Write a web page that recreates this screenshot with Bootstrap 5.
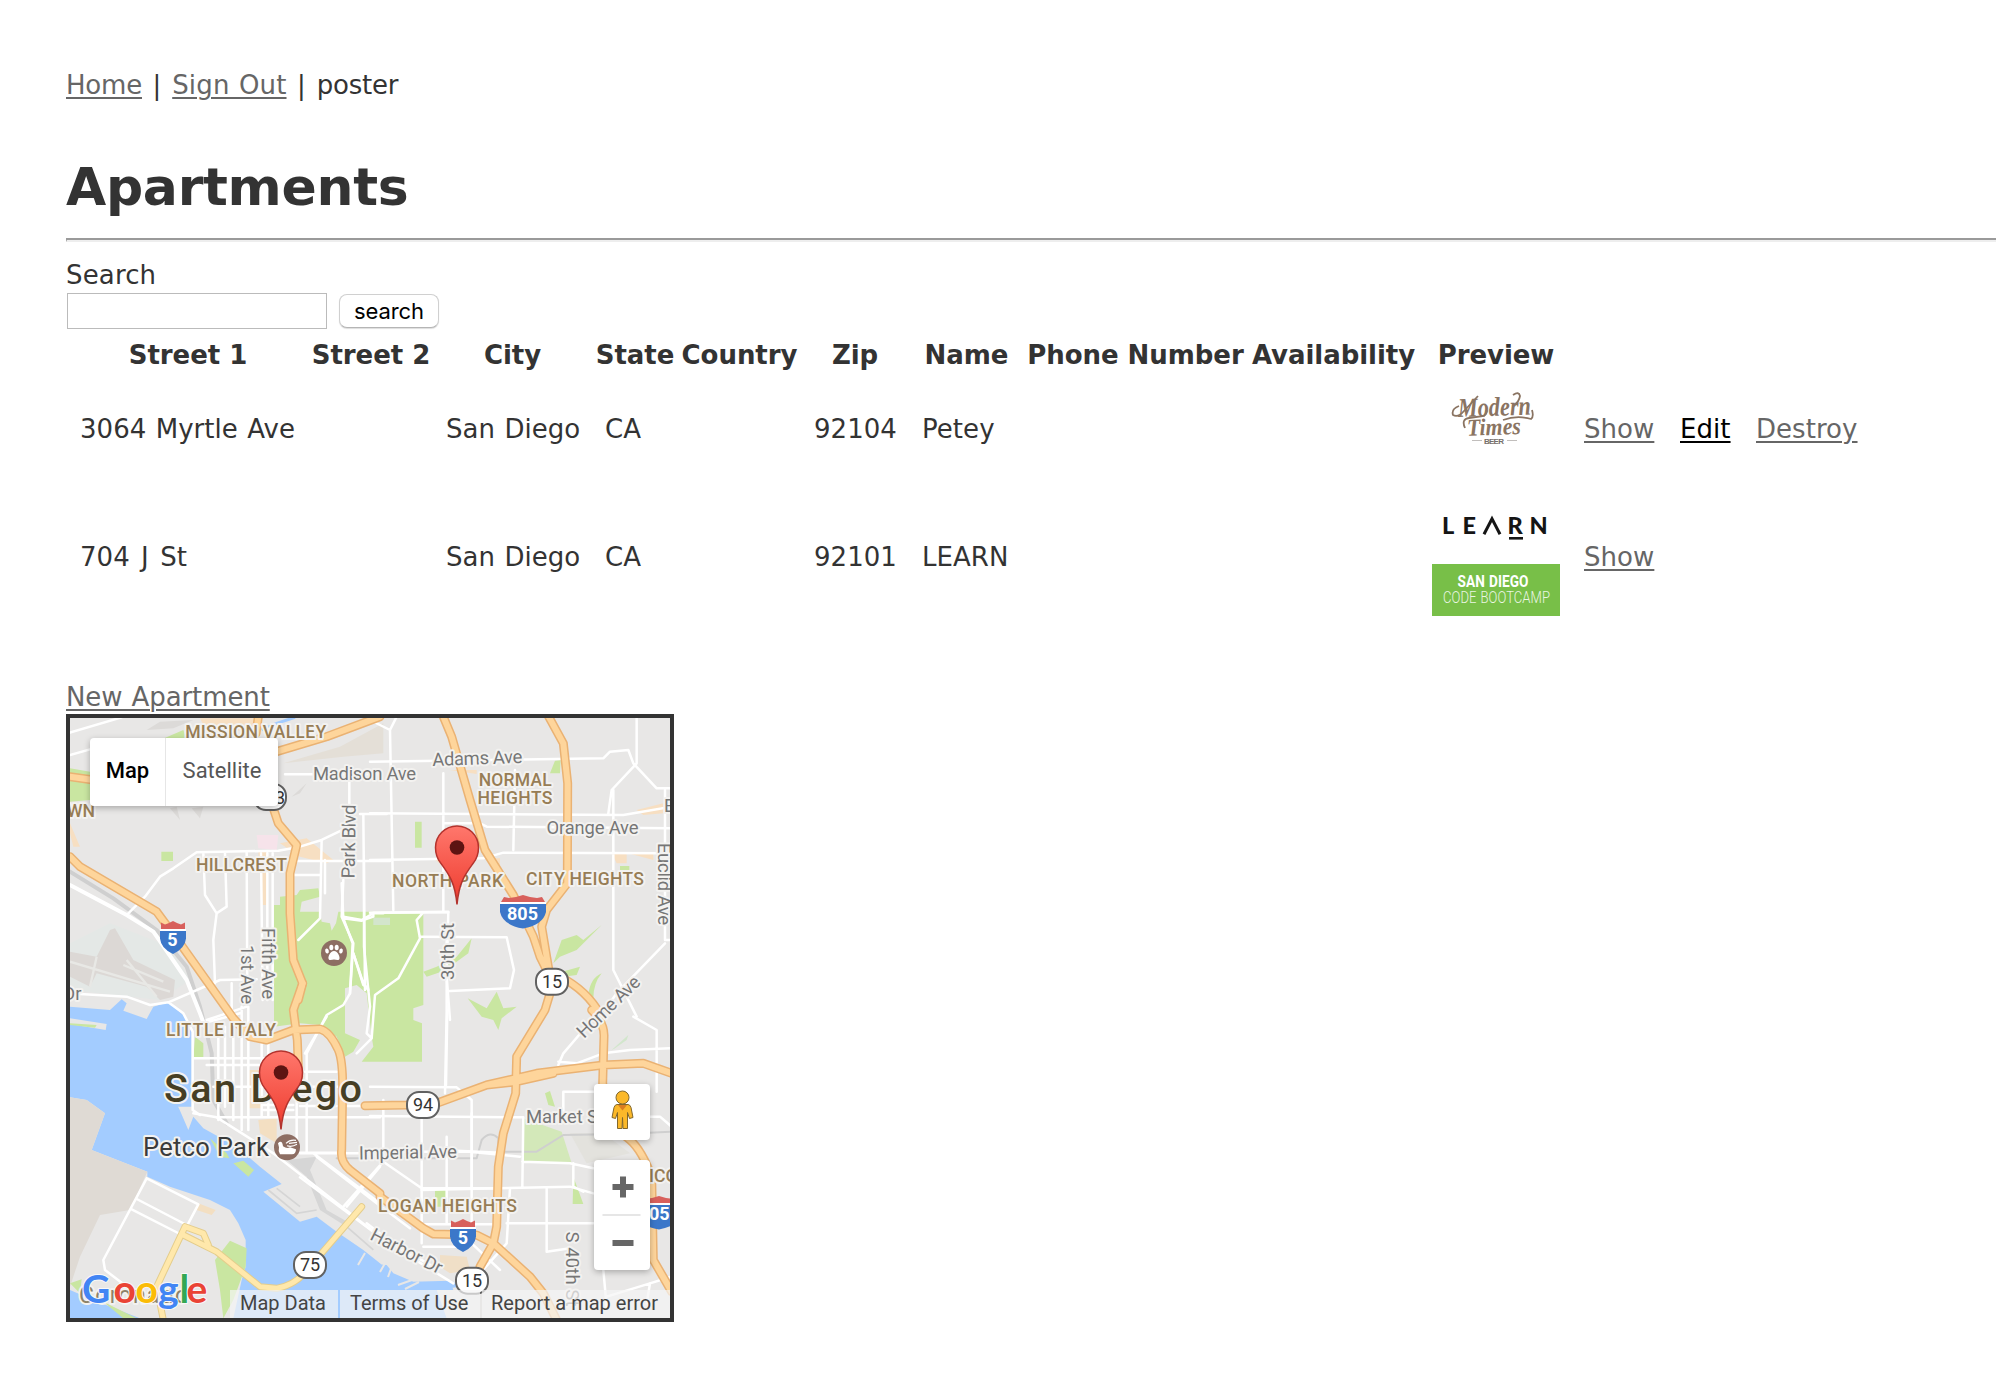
<!DOCTYPE html>
<html lang="en">
<head>
<meta charset="utf-8">
<title>Apartments</title>
<link href="https://cdn.jsdelivr.net/npm/bootstrap@5.3.0/dist/css/bootstrap.min.css" rel="stylesheet">
<script src="https://cdn.jsdelivr.net/npm/bootstrap@5.3.0/dist/js/bootstrap.bundle.min.js"></script>
<style>
body{font-family:"DejaVu Sans",Verdana,sans-serif;font-size:26px;line-height:36px;color:#333;background:#fff;overflow:hidden}
.page{padding:67px 0 0 66px}
a{color:#666;text-decoration-thickness:2px;text-underline-offset:3px}
.topnav{height:36px;letter-spacing:-.2px;white-space:pre;word-spacing:1px}
.topnav i{font-style:normal;margin:0 2px 0 1.5px}
.topnav .out{letter-spacing:.15px}
h1.title{font-size:52px;line-height:72px;font-weight:700;letter-spacing:-.3px;margin:48px 0 15px}
.rule{height:4px;border-top:2px solid #9a9a9a;border-left:1px solid #9a9a9a;border-bottom:2px solid #eee;margin-bottom:15px}
.lbl{letter-spacing:.15px;height:36px}
.q{width:260px;height:36px;margin-left:1px;border:1px solid #bbb;border-radius:0;padding:0 6px}
.go{width:100px;height:34px;margin:1px 0 0 12px;border:1px solid #d0d0d0;border-bottom-color:#b5b5b5;border-radius:8px;background:#fff;color:#000;font:22px/31px Inter,sans-serif;letter-spacing:-.1px;padding:0;box-shadow:0 1px 1px #ddd}
.apts{table-layout:fixed;width:1803px!important;margin-left:1px;color:#333;letter-spacing:.05px;word-spacing:1px}
.apts>:not(caption)>*>*{padding:0 0 0 13px;white-space:nowrap;color:#333}
.apts>tbody>tr>td:nth-child(n+10){padding-left:12px}
.apts>thead>tr>th{padding:8px 0 3px;text-align:center;letter-spacing:-.05px;word-spacing:0}
.apts svg{display:block}
.apts a.on{color:#000}
.wide-j{margin:0 2px 0 2px}
.newapt{margin-top:47px;height:35px;letter-spacing:-.1px;word-spacing:1px}
.map{width:608px;height:608px;border:4px solid #333;font-family:Roboto,sans-serif}
.map>svg{display:block}
.ctl{background:#fff;border-radius:4px;box-shadow:0 2px 6px rgba(0,0,0,.28)}
.types{left:20px;top:20px;width:188px;height:68px;font-size:22px;line-height:66px}
.types b{width:76px;font-weight:500;color:#000;border-right:1px solid #e6e6e6;text-align:center}
.types span{color:#565656;width:112px;text-align:center}
.peg{left:524px;top:366px;width:56px;height:56px}
.zoomer{left:524px;top:442px;width:56px;height:110px}
.legal{left:160px;right:0;bottom:0;height:28px;font-size:20px;line-height:27px;color:#444;gap:2px}
.legal span{background:rgba(245,245,245,.7);white-space:nowrap}
.hood{fill:#977d55;font-size:17.6px;font-weight:500}
.st{fill:#767676;font-size:18.5px}
.halo text{stroke:#f3f2f0;stroke-width:4px;stroke-linejoin:round;paint-order:stroke}
.ln path{fill:none;vector-effect:non-scaling-stroke;stroke-linejoin:round;stroke-linecap:round}
</style>
</head>
<body>
<div class="page">
<nav class="topnav"><a href="#">Home</a> <i>|</i> <a href="#" class="out">Sign Out</a> <i>|</i> poster</nav>
<h1 class="title">Apartments</h1>
<div class="rule"></div>
<form>
<div class="lbl">Search</div>
<div class="d-flex align-items-start"><input class="q form-control" aria-label="Search"><button type="button" class="btn go">search</button></div>
</form>
<table class="table table-borderless align-middle mb-0 apts">
<colgroup><col style="width:242px"><col style="width:124px"><col style="width:159px"><col style="width:86px"><col style="width:123px"><col style="width:108px"><col style="width:115px"><col style="width:223px"><col style="width:173px"><col style="width:152px"><col style="width:96px"><col style="width:76px"><col style="width:126px"></colgroup>
<thead><tr><th>Street 1</th><th>Street 2</th><th>City</th><th>State</th><th>Country</th><th>Zip</th><th>Name</th><th>Phone Number</th><th>Availability</th><th>Preview</th><th></th><th></th><th></th></tr></thead>
<tbody>
<tr><td>3064 Myrtle Ave</td><td></td><td>San Diego</td><td>CA</td><td></td><td>92104</td><td>Petey</td><td></td><td></td><td>
<svg width="128" height="105" viewBox="1432 376 128 105"><g fill="#8a7462" stroke="#8a7462" font-family="Liberation Serif,serif" font-style="italic" font-weight="700"><text x="1458" y="416" font-size="27" textLength="73" lengthAdjust="spacingAndGlyphs" stroke="none" transform="rotate(-2 1490 410)">Modern</text><text x="1467" y="435" font-size="24" textLength="54" lengthAdjust="spacingAndGlyphs" stroke="none" transform="rotate(-2 1490 430)">Times</text><path d="M1459 406q-8 3-6 9q5 3 11-4l14-15M1465 428q-4-9 4-10l15-2q4-4 2-6M1503 420q14-5 28-1q3-2 1-9M1513 395q6-4 7 1q-1 6-6 9" fill="none" stroke-width="1.8"/></g><g fill="#77706b"><text x="1484" y="443.500" font-family="Liberation Sans,sans-serif" font-weight="700" font-size="8" textLength="20">BEER</text><path d="M1472 440h10v.8h-10zM1507 440h10v.8h-10z" opacity=".6"/></g></svg></td><td><a href="#">Show</a></td><td><a href="#" class="on">Edit</a></td><td><a href="#">Destroy</a></td></tr>
<tr><td>704 <span class="wide-j">J</span> St</td><td></td><td>San Diego</td><td>CA</td><td></td><td>92101</td><td>LEARN</td><td></td><td></td><td>
<svg width="128" height="151" viewBox="1432 481 128 151"><g font-family="Lato,sans-serif" font-weight="900" font-size="23.500" fill="#151515"><text y="534.300" x="1442 1462.500">LE</text><path d="M1484 534.300l8-15.500 8 15.500" fill="none" stroke="#151515" stroke-width="3"/><text y="534.300" x="1507.500 1529.500">RN</text><path d="M1509 537h14v2.600h-14z"/></g><path fill="#78bf48" d="M1432 564h128v52h-128z"/><g fill="#fff" font-family="Roboto,sans-serif"><text x="1457.500" y="587" font-size="16" font-weight="700" textLength="71" lengthAdjust="spacingAndGlyphs">SAN DIEGO</text><text x="1443" y="602.800" font-size="16" font-weight="300" textLength="107" lengthAdjust="spacingAndGlyphs" opacity=".85">CODE BOOTCAMP</text></g></svg></td><td><a href="#">Show</a></td><td></td><td></td></tr>
</tbody></table>
<div class="newapt"><a href="#">New Apartment</a></div>
<div class="map position-relative overflow-hidden">
<svg width="600" height="600" viewBox="70 718 600 600">
<defs>
<linearGradient id="pinfill" x2="0" y2="1"><stop offset="0" stop-color="#ff776c"/><stop offset="1" stop-color="#ee3b2e"/></linearGradient>
<g id="pin"><path d="M0 0C-2-22-8-30-16-41C-21-47-21.500-52-21.500-57A21.500 21.500 0 0 1 21.500-57C21.500-52 21-47 16-41C8-30 2-22 0 0z" fill="url(#pinfill)" stroke="#b3332d" stroke-width="1.500"/><circle cy="-57" r="7.300" fill="#5d1412"/></g>
<g id="i5"><path d="M-12-9V-16l4 2 4-1.500 4-2 4 2 4 1.500 4-2V-9z" fill="#d8605c"/><path d="M-13-7.500h26V0Q12 10 0 15.500Q-12 10-13 0z" fill="#3b77c9"/><path d="M-13-9.500h26v2h-26z" fill="#fff"/></g>
<g id="i805"><path d="M-22-10l3-5 5 1 7-1 7-2 7 2 7 1 5-1 3 5z" fill="#d8605c"/><path d="M-23-8h46V0Q20 13 0 16.500Q-20 13-23 0z" fill="#3b77c9"/><path d="M-23-10h46v2h-46z" fill="#fff"/></g>
<rect id="oval" x="-16" y="-13" width="32" height="26" rx="12" fill="#fff" stroke="#616161" stroke-width="2"/>
<g id="hw" class="ln">
<g transform="translate(60 680) scale(.33333)"><path d="M960 110L800 170L650 215M30 290L100 300M595 110L588 160M635 370L655 430L710 495L690 580L690 700L700 840L728 910L715 960"/></g>
<g transform="translate(60 840) scale(.33333)"><path d="M728 430L700 510L712 600L716 710M30 50L60 80L290 215L360 310L520 535L570 590L620 600L700 570L780 567Q810 575 835 630Q848 660 848 740L845 930Q840 965 870 990L960 1060"/></g>
<g transform="translate(300 1100) scale(.33333)"><path d="M240 290L370 385L400 402L530 405L580 430"/></g>
<g transform="translate(370 710) scale(.33333)"><path d="M220 20L245 80L300 270L345 420L430 555L490 680L510 740L540 800M536 20L580 100L593 220L592 520L530 600L515 650L540 800M570 800Q650 840 692 915"/></g>
<g transform="translate(370 1010) scale(.33333)"><path d="M540 -50L525 0L440 140L437 250L400 370L385 470L380 650L370 700L330 770M370 700L480 800L520 850L560 930M665 0Q704 40 702 80L698 220L720 340L780 390Q815 420 845 500L850 750L905 845M-15 287L110 285L200 280L350 225L500 190L700 165L820 160L905 190M350 225L440 215L550 190"/></g>
</g>
<g id="yw" class="ln"><g transform="translate(60 1010) scale(.33333)"><path d="M310 930L290 830L375 650L430 670L445 705M370 675L470 725L600 830L650 835Q710 825 750 770L905 590"/></g></g>
</defs>
<path fill="#e8e7e6" d="M70 718h600v600H70z"/>
<!-- hills and built-up areas -->
<g transform="translate(60 680) scale(.33333)"><path fill="#e4dfd7" d="M670 250L840 200L970 130L970 220L850 230L760 240z"/><path fill="#dcdad8" d="M260 150L300 125L400 120L340 145zM330 385L350 380L360 420zM395 385L430 380L420 415zM695 350L740 310L720 340z"/><path fill="#f7dfc2" d="M420 115L590 115L580 150L440 155zM660 490L740 475L820 540L800 550L720 530zM30 430L60 500L40 500L30 460zM595 515h25v160h-12z"/><path fill="#f6e3ea" d="M590 465L655 465L650 510L595 505z"/><path fill="none" stroke="#a3ccff" stroke-width="9" d="M605 150L650 130L705 112"/></g>
<g transform="translate(60 840) scale(.33333)"><path fill="#e4e8e6" d="M30 310L150 250L330 320L390 420L300 480L30 450z"/><path fill="#dcd8d5" d="M30 335L110 350L150 270L165 265L220 360L345 420L340 470L300 480L260 440L110 400L90 440L30 410z"/><path fill="none" stroke="#e8e8e5" stroke-width="7" d="M30 365L330 455M190 375L310 425M110 350L90 440M200 360L290 470"/></g>
<!-- bay -->
<g transform="translate(60 1010) scale(.33333)">
<path fill="#a3ccff" d="M30-10L150 0L185-32L200-20L190 2L260 27L280-10L325-23L370 15L395 65L395 290L355 290L385 360L400 320L430 355L530 410L600 470L665 522L610 545L720 635L770 620L830 665L910 720L960 760L990 790L1020 820L1180 815L1200 830L1130 840L1160 925L520 925L545 810L557 770L557 690L535 640L510 600L450 570L330 530L262 500L262 485L95 420L135 310L80 270L30 262z"/>
<path fill="#dfdad4" d="M30 262L80 270L135 310L95 420L262 485L210 600L120 615L60 740L30 830z"/><path fill="#a3ccff" d="M30 840L100 870L240 925H30z"/>
<path fill="#e8e7e6" d="M30 25L140 42L137 60L30 42zM355 290L395 300L375 325z"/>
<path fill="#c9e6a1" d="M30 40L110 45L105 53L30 45zM405 80L400 145L430 145L430 100zM450 385L500 430L508 445L480 440zM520 460L550 452L582 480L565 500zM465 750L510 692L560 715L557 770L520 870L490 925L480 840zM30 820L65 808L60 850zM130 875L230 925L190 925z"/>
<path fill="#f3dfc2" d="M595 330L650 325L650 400L600 370zM415 580L467 600L455 615L410 600zM568 180h40v115h-40z"/>
<path fill="#d6d6d6" d="M680 450L770 440L750 480L800 600L870 640L860 650L780 600L740 500z"/>
<path fill="none" stroke="#d5d5d5" stroke-width="5" d="M625 540L710 610L770 600M650 535L720 590M860 650L940 720"/>
</g>
<g transform="translate(370 1010) scale(.33333)"><path fill="#a3ccff" d="M-10 760L50 765L70 790L130 815L240 812L250 840H0z"/><path fill="#f0dfc7" d="M210 735L290 740L300 780L240 790L210 770z"/><path fill="#e3e2dd" d="M600 370L700 370L780 430L650 460z"/><path fill="#c9e6a1" d="M525 250L540 243L555 290L535 285zM610 500L640 582L608 582zM195 540h33v50h-33z"/><path fill="#d3e8b9" d="M460 325L575 365L605 460L460 455z"/><path fill="#d2e6cc" d="M725 120L775 75L770 90L735 115z"/></g>
<path fill="none" stroke="#e8e7e6" stroke-width="2" d="M358 1265l7-12M380 1272l8-14M388 1277l5-14M398 1285l14-5M405 1289l14-7"/>
<!-- parks -->
<g fill="#c9e6a1"><g transform="translate(300 860) scale(.33333)"><path d="M-78 500L-78 135L-60 135L-60 110L-10 105L0 90L55 85L60 110L5 125L0 155H60L65 185L90 190L95 212L108 190L115 155H370V435L340 445V480L366 490V605H185L220 560L215 530L200 400L170 375L135 385L135 520L180 540L160 575L135 590L110 530L60 495L0 490z"/><path d="M370 335L410 320L470 290L515 235L505 280L470 305L440 330L380 350zM503 415L560 445L590 395L610 445L650 440L605 475L595 510L580 480L545 470zM760 310L785 240L830 225L850 240L905 195L830 270L780 290zM770 340L840 320L830 345L790 350zM865 405Q870 355 905 340Q880 370 880 415z"/><path fill="#d3e5cc" d="M220 173h50v22h-50z"/></g>
<g transform="translate(370 710) scale(.33333)"><path d="M135 335h20v78h-20zM540 190L555 152L572 150L570 190zM750 468h28v20h-28z"/></g>
<g transform="translate(60 680) scale(.33333)"><path d="M30 265L90 275V360L30 365zM300 180L370 150L380 178zM304 515h35v28h-35z"/></g></g>
<g fill="#f7dfc2" transform="translate(370 710) scale(.33333)"><path d="M800 300L880 280L880 310L820 315zM725 430h45v30h-30zM775 430h75v20zM190 445h50v40zM350 445h40v30zM240 180h80v12z"/></g>
<!-- railways -->
<g class="ln" stroke="#cfcfcf" stroke-width="2"><g transform="translate(60 840) scale(.33333)"><path d="M30 95L160 175L290 270L380 380L420 500L455 640L460 780L500 850" stroke-width="4"/></g><g transform="translate(370 1010) scale(.33333)"><path d="M-100 445H320L335 390Q360 360 385 385L385 425L500 425L580 375L760 372L905 365"/></g></g>
<!-- streets -->
<g class="ln" stroke="#fff" stroke-width="2.500">
<g transform="translate(60 680) scale(.33333)"><path d="M30 158L185 112M30 225L90 208M675 283H960M868 300V440L785 480L720 500L655 512L410 517L340 565L300 590L255 650L205 700M900 402H980M910 402L915 930M785 480L780 715L715 780M430 520L435 645L470 700L500 680L495 520M470 700L460 780L465 910M560 517L562 960M603 520L608 960M622 520V960M638 520V960M710 543H990M700 585H780M850 600L845 710L880 790L870 940M850 710L905 720L940 700L970 700M880 820L910 910L925 930"/></g>
<g transform="translate(60 840) scale(.33333)"><path d="M30 135L200 225L280 275L380 420L420 520L435 560" stroke-width="4"/><path d="M60 462L200 470L270 495L325 487L480 420L590 418M325 487L370 520L398 575V810L420 825M400 655H640M440 540L560 500M410 555L540 520M475 560V840M495 560V800M520 520V840M545 500V870M565 500V870M515 430V540M605 600V830M625 600V830M440 675H700"/></g>
<g transform="translate(60 1010) scale(.33333)"><path d="M400 310L470 322H960M470 322L640 430L960 680M720 430H960M760 430L960 580M860 590L960 470M735 130L800 20M735 185H830M710 100V430M740 130V430M460 230H840M610 285H700M610 300H700M260 505L130 750L135 780L240 860M260 505L415 583L385 640M230 567L380 645M215 598L360 672"/></g>
<g transform="translate(300 1100) scale(.33333)"><path d="M0 18H110M140 18H330M250 0V180M365 50V430M440 110V370M515 40V400M130 320L250 185L365 265H600M365 373H600M470 152L600 158M0 158H110M50 170L230 310L330 385M0 232L240 410L400 500M200 370L330 470L460 550M370 440H500M515 430L600 510"/></g>
<g transform="translate(370 1010) scale(.33333)"><path d="M0 318L460 322L457 530M0 230L260 232L305 270V530M100 425H300L450 440M457 455L600 460L670 475M155 540L600 530L670 550M530 535V725L600 715M410 640H670M232 0L228 225M565 165L580 130L640 60M565 155L620 160L700 130L780 120L900 115M580 320V245H680M840 320H870L905 350M860 245V60L790 20M420 535L410 700L330 790M610 460V530L640 545M700 780L710 890M710 860L840 820L905 800M830 880L840 820"/></g>
<g transform="translate(370 710) scale(.33333)"><path d="M0 155L700 145L720 125L775 120L790 160L860 235H900M800 20V160L725 240L715 310M730 240V780L800 920M0 310L760 315L905 290M220 340H330L350 350L905 355M0 450L340 445L400 428L905 430M60 60L70 600M0 30L60 60L80 20M220 190V600M435 180L430 420M885 240V690L905 690M885 700L740 850L690 920M0 608L235 605L230 800L240 930M150 680L410 682L432 780L420 835L240 843"/></g>
<g transform="translate(300 860) scale(.33333)"><path d="M192 0V260L210 440L200 520L215 535L225 405L295 355L360 235L350 180L370 157M125 70L130 175L158 250L150 400L130 435L80 465L20 580M160 280L190 375L205 385M130 175L185 182L220 170V158L445 157M170 580L215 535M440 235V455L435 700M75 0V100"/></g>
</g>
<use href="#yw" stroke="#e4cd8c" stroke-width="7"/><use href="#yw" stroke="#ffe8ab" stroke-width="5"/><use href="#hw" stroke="#eab273" stroke-width="9"/><use href="#hw" stroke="#fed59b" stroke-width="6"/>
<g class="halo">
<g class="hood"><text x="185.200" y="738.300" textLength="141">MISSION VALLEY</text><text x="196" y="871" textLength="91">HILLCREST</text><text x="67" y="816.700">WN</text><text x="478.700" y="786" textLength="73">NORMAL</text><text x="477.500" y="804" textLength="75">HEIGHTS</text><text x="392" y="887" textLength="111">NORTH PARK</text><text x="526" y="885" textLength="118">CITY HEIGHTS</text><text x="166" y="1036" textLength="110">LITTLE ITALY</text><text x="378" y="1211.700" textLength="139">LOGAN HEIGHTS</text><text x="649" y="1181.700">ICO</text></g>
<g class="st"><text x="313" y="780" textLength="103">Madison Ave</text><text transform="translate(432.500 766) rotate(-2)" textLength="90">Adams Ave</text><text x="546.500" y="834" textLength="92">Orange Ave</text><text x="664" y="812">E</text><text transform="translate(658 843) rotate(90)" textLength="82">Euclid Ave</text><text transform="translate(453.500 980) rotate(-90)" textLength="57">30th St</text><text transform="translate(354.500 878.500) rotate(-89)" textLength="74">Park Blvd</text><text transform="translate(261.500 928) rotate(90)" textLength="71">Fifth Ave</text><text transform="translate(240.500 945) rotate(90)" textLength="59">1st Ave</text><text transform="translate(584 1039) rotate(-44)" textLength="80">Home Ave</text><text x="526" y="1122.500" textLength="78">Market St</text><text transform="translate(359 1159.500) rotate(-1)" textLength="98">Imperial Ave</text><text transform="translate(369 1239) rotate(27)" textLength="78">Harbor Dr</text><text transform="translate(565.500 1231.500) rotate(90)" textLength="75">S 40th St</text><text x="63" y="1000">Dr</text></g>
<text x="164" y="1101.700" font-size="39.500" font-weight="500" fill="#463e24" textLength="198">San Diego</text>
<text x="143" y="1155.700" font-size="25.500" fill="#3b3b3b" textLength="126">Petco Park</text>
<text x="79" y="1302.500" font-size="23" fill="#8d8268" textLength="109">Coronado</text>
</g>
<g text-anchor="middle" font-size="18" fill="#333"><g><use href="#oval" x="270" y="797"/><text x="270" y="803.500">163</text><use href="#oval" x="552" y="981.700"/><text x="552" y="988">15</text><use href="#oval" x="423" y="1105"/><text x="423" y="1111.300">94</text><use href="#oval" x="310" y="1265"/><text x="310" y="1271.300">75</text><use href="#oval" x="472" y="1280.700"/><text x="472" y="1287">15</text></g>
<g fill="#fff" font-weight="700"><use href="#i5" x="173" y="938.500"/><text x="172.500" y="946">5</text><use href="#i5" x="463" y="1236.500"/><text x="463" y="1244">5</text><use href="#i805" x="523" y="912"/><text x="522.500" y="919.500">805</text><use href="#i805" x="659" y="1213"/><text x="649" y="1220" text-anchor="start">05</text></g></g>
<g transform="translate(334 953)"><circle r="13" fill="#8d6e63"/><g fill="#fff"><path d="M0-2C4-2 6 4 5.500 5.500C5 8 2 6.500 0 6.500S-5 8-5.500 5.500C-6 4-4-2 0-2z"/><ellipse cx="-2.700" cy="-5.500" rx="2" ry="2.800"/><ellipse cx="2.700" cy="-5.500" rx="2" ry="2.800"/><ellipse cx="-7" cy="-2" rx="1.800" ry="2.500" transform="rotate(-15 -7 -2)"/><ellipse cx="7" cy="-2" rx="1.800" ry="2.500" transform="rotate(15 7 -2)"/></g></g>
<g transform="translate(287 1147.300)"><circle r="13" fill="#8d6e63"/><path fill="#fff" d="M-9-4Q-5-8-4-1Q0 2 3 0L9 2Q9 7 5 7H-7Q-9 3-8 0z"/><path d="M-1-4Q3-8 9-7M0-1.500Q5 0 10-3M2-4L10-5" stroke="#fff" stroke-width="1.200" fill="none"/></g>
<use href="#pin" x="457" y="904.500"/><use href="#pin" x="281" y="1129.500"/>
<g class="halo" font-family="Lato,sans-serif" font-size="39" font-weight="700"><text y="1303" x="82 113.500 135.500 158 179.500 186.500" style="stroke-width:2px;stroke:#f8f8f8"><tspan fill="#4285f4">G</tspan><tspan fill="#ea4335">o</tspan><tspan fill="#fbbc05">o</tspan><tspan fill="#4285f4">g</tspan><tspan fill="#34a853">l</tspan><tspan fill="#ea4335">e</tspan></text></g>
</svg>
<div class="ctl types position-absolute d-flex"><b>Map</b><span>Satellite</span></div>
<div class="ctl peg position-absolute d-flex justify-content-center"><svg width="56" height="56" viewBox="593.500 1084 56 56"><g fill="#fbb829" stroke="#81672c" stroke-width="1"><path d="M616.500 1104.500h11q2 0 3 3l2 10-3.500 1-2-6v16h-4.500l-.5-11-.5 11h-4.500v-16l-2 6-3.500-1 2-10q1-3 3-3z"/><circle cx="622" cy="1097.500" r="6.500"/></g><path d="M617.500 1105h9l-4.500 5.500z" fill="#dc7d20"/></svg></div>
<div class="ctl zoomer position-absolute"><svg width="56" height="110" viewBox="593.500 1160 56 110"><path d="M612 1184h21v6h-21zM619.500 1176.500h6v21h-6zM612 1240h21v6h-21z" fill="#666"/><path d="M602 1214h38v2h-38z" fill="#e6e6e6"/></svg></div>
<div class="legal position-absolute d-flex"><span style="width:108px;padding-left:10px">Map Data</span><span style="width:140px;padding-left:10px">Terms of Use</span><span class="flex-fill" style="padding-left:9px">Report a map error</span></div>
</div>
</div>
</body>
</html>
